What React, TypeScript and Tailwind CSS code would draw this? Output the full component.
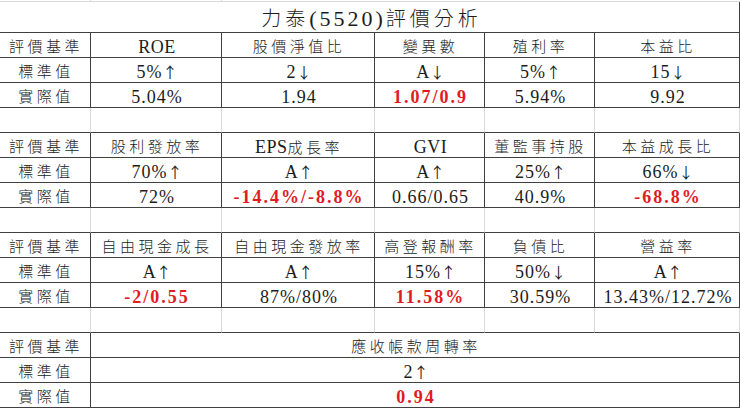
import React from 'react'

type Cell = { text: string; red?: boolean }

const widths = ['w-[91px]', 'w-[131px]', 'w-[153px]', 'w-[110px]', 'w-[110px]', 'w-[145px]']

const sections: Cell[][][] = [
  [
    [
      { text: '評價基準' },
      { text: 'ROE' },
      { text: '股價淨值比' },
      { text: '變異數' },
      { text: '殖利率' },
      { text: '本益比' },
    ],
    [{ text: '標準值' }, { text: '5%↑' }, { text: '2↓' }, { text: 'A↓' }, { text: '5%↑' }, { text: '15↓' }],
    [
      { text: '實際值' },
      { text: '5.04%' },
      { text: '1.94' },
      { text: '1.07/0.9', red: true },
      { text: '5.94%' },
      { text: '9.92' },
    ],
  ],
  [
    [
      { text: '評價基準' },
      { text: '股利發放率' },
      { text: 'EPS成長率' },
      { text: 'GVI' },
      { text: '董監事持股' },
      { text: '本益成長比' },
    ],
    [{ text: '標準值' }, { text: '70%↑' }, { text: 'A↑' }, { text: 'A↑' }, { text: '25%↑' }, { text: '66%↓' }],
    [
      { text: '實際值' },
      { text: '72%' },
      { text: '-14.4%/-8.8%', red: true },
      { text: '0.66/0.65' },
      { text: '40.9%' },
      { text: '-68.8%', red: true },
    ],
  ],
  [
    [
      { text: '評價基準' },
      { text: '自由現金成長' },
      { text: '自由現金發放率' },
      { text: '高登報酬率' },
      { text: '負債比' },
      { text: '營益率' },
    ],
    [{ text: '標準值' }, { text: 'A↑' }, { text: 'A↑' }, { text: '15%↑' }, { text: '50%↓' }, { text: 'A↑' }],
    [
      { text: '實際值' },
      { text: '-2/0.55', red: true },
      { text: '87%/80%' },
      { text: '11.58%', red: true },
      { text: '30.59%' },
      { text: '13.43%/12.72%' },
    ],
  ],
]

const last: Cell[][] = [
  [{ text: '評價基準' }, { text: '應收帳款周轉率' }],
  [{ text: '標準值' }, { text: '2↑' }],
  [{ text: '實際值' }, { text: '0.94', red: true }],
]

// split into CJK runs, arrows and latin runs, each gets its own size and spacing
const CellText = ({ cell }: { cell: Cell }) => {
  const parts = cell.text.split(/([\u4e00-\u9fff]+|[↑↓])/).filter(Boolean)
  return (
    <span className={cell.red ? 'font-bold text-[#e01b24]' : ''}>
      {parts.map((p, i) =>
        p === '↑' || p === '↓' ? (
          <span key={i} className="font-['Noto_Sans_CJK_TC',sans-serif] text-[15px]">
            {p}
          </span>
        ) : /[\u4e00-\u9fff]/.test(p) ? (
          <span key={i} className="text-[15px] font-light tracking-[3.5px]">
            {p}
          </span>
        ) : /^[A-Z]+$/.test(p) ? (
          <span key={i} className="text-[18px] tracking-[0.5px]">
            {p}
          </span>
        ) : (
          <span key={i} className={cell.red ? 'text-[18px] tracking-[2px]' : 'text-[18px] tracking-[1px]'}>
            {p}
          </span>
        ),
      )}
    </span>
  )
}

const Row = ({ cells }: { cells: Cell[] }) => (
  <div className="flex h-[25px]">
    {cells.map((c, i) => (
      <div
        key={i}
        className={`${widths[i]} flex shrink-0 items-center justify-center border-b border-r border-[#404040] pt-[3px] pl-[2px] leading-none`}
      >
        <CellText cell={c} />
      </div>
    ))}
  </div>
)

const EmptyRow = () => (
  <div className="flex h-[25px]">
    {widths.map((w, i) => (
      <div key={i} className={`${w} shrink-0 border-b border-r border-b-[#404040] border-r-[#d9d9d9]`} />
    ))}
  </div>
)

export default function App() {
  return (
    <div className="h-[408px] w-[740px] overflow-hidden bg-white font-['Liberation_Serif','Noto_Sans_CJK_TC',serif] text-[#1c1c1c]">
      <div className="flex h-[2px] border-b border-[#d9d9d9]">
        <div className="w-[91px] border-r border-[#d9d9d9]" />
        <div className="w-[131px] border-r border-[#d9d9d9]" />
      </div>
      <div className="flex h-[31px] items-center justify-center border-b border-r border-[#404040] pt-[3px] pl-[4px]">
        <span className="text-[20px] font-light tracking-[4px]">力泰</span>
        <span className="text-[22px] tracking-[3px]">(5520)</span>
        <span className="text-[20px] font-light tracking-[4px]">評價分析</span>
      </div>
      {sections.map((rows, s) => (
        <div key={s}>
          {rows.map((r, j) => (
            <Row key={j} cells={r} />
          ))}
          <EmptyRow />
        </div>
      ))}
      {last.map((r, j) => (
        <div key={j} className="flex h-[25px]">
          <div className="flex w-[91px] shrink-0 items-center justify-center border-b border-r border-[#404040] pt-[3px] pl-[2px] leading-none">
            <CellText cell={r[0]} />
          </div>
          <div className="flex w-[649px] shrink-0 items-center justify-center border-b border-r border-[#404040] pt-[3px] pl-[2px] leading-none">
            <CellText cell={r[1]} />
          </div>
        </div>
      ))}
    </div>
  )
}
